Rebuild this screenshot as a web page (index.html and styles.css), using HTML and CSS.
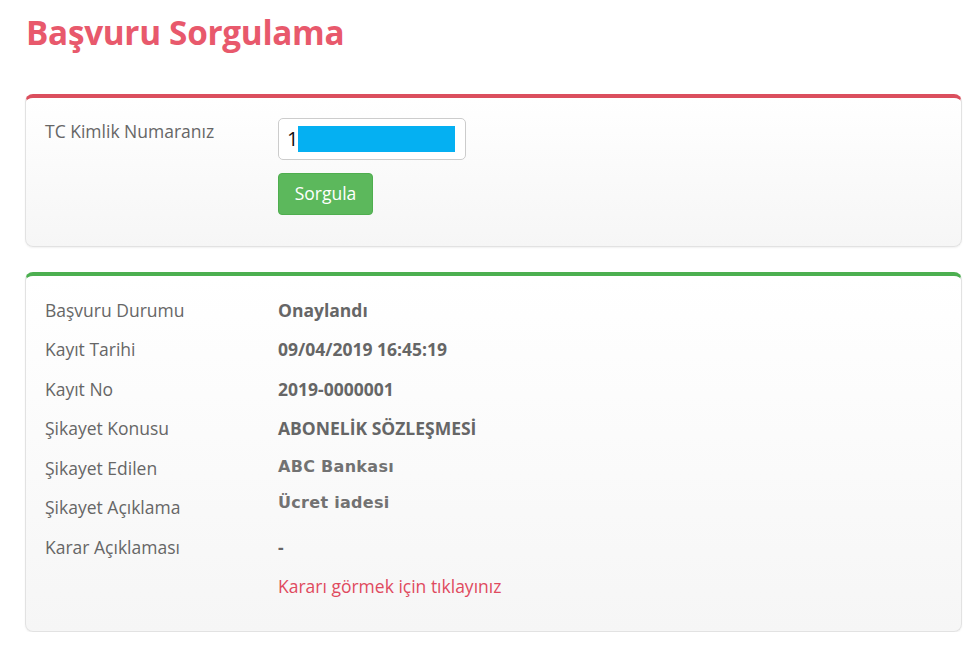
FILE: index.html
```html
<!DOCTYPE html>
<html lang="tr">
<head>
<meta charset="utf-8">
<title>Başvuru Sorgulama</title>
<link rel="stylesheet" href="styles.css">
</head>
<body>
<div class="page">
  <h1 class="title">Başvuru Sorgulama</h1>

  <section class="panel panel-red">
    <div class="form-row">
      <label class="label" for="tc">TC Kimlik Numaranız</label>
      <div class="field">
        <div class="input" id="tc"><span class="input-text">1</span><span class="mask"></span></div>
        <button class="btn" type="button">Sorgula</button>
      </div>
    </div>
  </section>

  <section class="panel panel-green">
    <dl class="details">
      <dt>Başvuru Durumu</dt><dd>Onaylandı</dd>
      <dt>Kayıt Tarihi</dt><dd>09/04/2019 16:45:19</dd>
      <dt>Kayıt No</dt><dd>2019-0000001</dd>
      <dt>Şikayet Konusu</dt><dd>ABONELİK SÖZLEŞMESİ</dd>
      <dt>Şikayet Edilen</dt><dd class="alt alt-1">ABC Bankası</dd>
      <dt>Şikayet Açıklama</dt><dd class="alt alt-2">Ücret iadesi</dd>
      <dt>Karar Açıklaması</dt><dd>-</dd>
      <dt></dt><dd class="link-cell"><a class="link" href="#">Kararı görmek için tıklayınız</a></dd>
    </dl>
  </section>
</div>
</body>
</html>
```

FILE: styles.css
```css
* { box-sizing: border-box; }
html, body { margin: 0; padding: 0; background: #fff; }
body {
  font-family: "Open Sans", "Liberation Sans", sans-serif;
  color: #666;
}
.page {
  padding: 0 15px 0 25px;
}
.title {
  margin: 0;
  padding: 9px 0 0 1px;
  height: 94px;
  font-size: 33.3px;
  font-weight: 700;
  line-height: 46px;
  color: #e8596c;
  letter-spacing: -0.3px;
}
.panel {
  border: 1px solid #e2e2e2;
  border-top: 4px solid #db4f5e;
  border-radius: 8px;
  background: linear-gradient(#ffffff, #f6f6f6);
  box-shadow: 0 1px 2px rgba(0,0,0,0.06);
}
.panel-red { border-top-color: #db4f5e; height: 153px; margin-bottom: 25px; }
.panel-green { border-top-color: #4caf50; height: 360px; }

.form-row {
  display: flex;
  padding: 20px 19px 0 19px;
}
.label {
  width: 233px;
  font-size: 17.5px;
  line-height: 24px;
  padding-top: 1px;
  color: #666;
}
.field {
  display: flex;
  flex-direction: column;
  align-items: flex-start;
  gap: 13px;
}
.input {
  width: 188px;
  height: 42px;
  border: 1px solid #ccc;
  border-radius: 5px;
  background: #fff;
  display: flex;
  align-items: center;
  padding: 6px 0 7px 8px;
}
.input-text {
  font-size: 20px;
  color: #111;
  line-height: 26px;
  width: 11px;
}
.mask {
  display: block;
  width: 157px;
  height: 26px;
  background: #05b0f2;
}
.btn {
  width: 95px;
  height: 42px;
  border: 1px solid #4fae4f;
  border-radius: 4px;
  background: #5cb85c;
  color: #fff;
  font-family: "Open Sans", "Liberation Sans", sans-serif;
  font-size: 17.5px;
  padding: 0 0 2px 0;
}

.details {
  margin: 0;
  padding: 14px 19px 0 19px;
  display: grid;
  grid-template-columns: 233px 1fr;
  grid-auto-rows: 39.5px;
  align-items: center;
}
.details dt {
  font-size: 17.5px;
  color: #666;
  line-height: 24px;
}
.details dd {
  margin: 0;
  font-size: 17.5px;
  font-weight: 700;
  color: #666;
  line-height: 24px;
}
.details dd.alt {
  font-family: "DejaVu Sans", Verdana, sans-serif;
  font-size: 16px;
  color: #727272;
  letter-spacing: 0.3px;
}
.details dd.alt-1 { align-self: start; margin-top: 7px; }
.details dd.alt-2 { align-self: start; margin-top: 3px; }
.link-cell { font-weight: 400 !important; }
.link {
  color: #e04a5e;
  text-decoration: none;
  font-size: 17.5px;
  font-weight: 400;
}
```
